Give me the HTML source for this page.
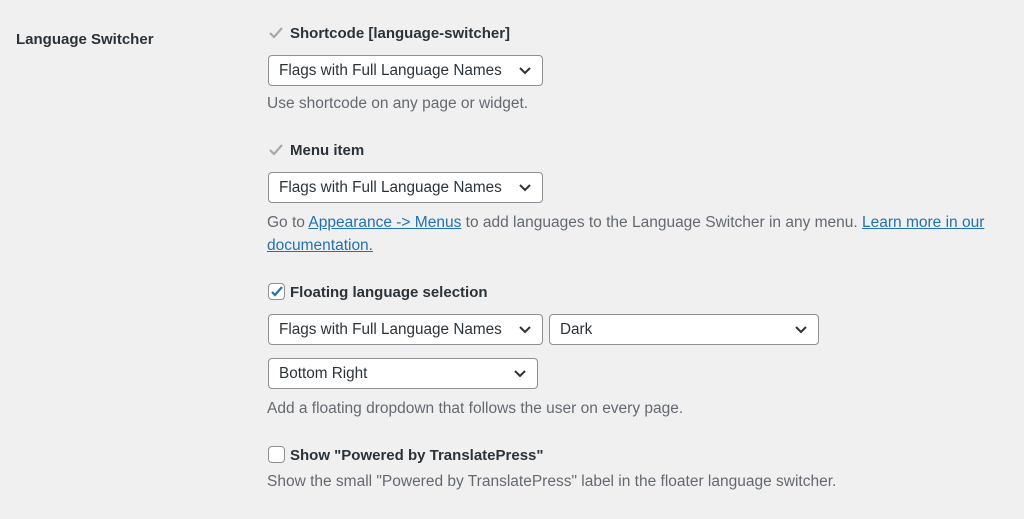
<!DOCTYPE html>
<html><head><style>
body{margin:0;width:1024px;height:519px;background:#f0f0f1;font-family:"Liberation Sans",sans-serif;color:#1d2327;position:relative;overflow:hidden}
.a{position:absolute;white-space:nowrap}
.lbl{font-size:15px;font-weight:bold;color:#2c3338}
.desc{font-size:15.5px;color:#646970}
.sel{position:absolute;height:31px;border:1px solid #8c8f94;border-radius:4px;background:#fff;box-sizing:border-box;font-size:15.3px;color:#2c3338;padding-left:10px;line-height:30px}
.sel svg{position:absolute;right:10px;top:10px}
.cb{position:absolute;width:17px;height:17px;border:1px solid #8c8f94;border-radius:4px;background:#fff;box-sizing:border-box}
a{color:#2271b1;text-decoration:underline}
</style></head><body>
<div class="a lbl" style="left:16px;top:31px">Language Switcher</div>

<svg class="a" style="left:268px;top:26px" width="16" height="14"><path d="M2 7l4 4 8-9" stroke="#a7aaad" stroke-width="2.2" fill="none"/></svg>
<div class="a lbl" style="left:290px;top:25px">Shortcode [language-switcher]</div>
<div class="sel" style="left:268px;top:55px;width:275px">Flags with Full Language Names<svg width="14" height="10"><path d="M2 2l5 5 5-5" stroke="#2c3338" stroke-width="2" fill="none"/></svg></div>
<div class="a desc" style="left:267px;top:95px">Use shortcode on any page or widget.</div>

<svg class="a" style="left:268px;top:143px" width="16" height="14"><path d="M2 7l4 4 8-9" stroke="#a7aaad" stroke-width="2.2" fill="none"/></svg>
<div class="a lbl" style="left:290px;top:142px">Menu item</div>
<div class="sel" style="left:268px;top:172px;width:275px">Flags with Full Language Names<svg width="14" height="10"><path d="M2 2l5 5 5-5" stroke="#2c3338" stroke-width="2" fill="none"/></svg></div>
<div class="a desc" style="left:267px;top:214px">Go to <a>Appearance -&gt; Menus</a> to add languages to the Language Switcher in any menu. <a>Learn more in our</a></div>
<div class="a desc" style="left:267px;top:237px"><a>documentation.</a></div>

<div class="cb" style="left:268px;top:283px"><svg width="17" height="17" style="position:absolute;left:-1px;top:-1px"><path d="M4 9l3 3 7-8" stroke="#2271b1" stroke-width="2.2" fill="none"/></svg></div>
<div class="a lbl" style="left:290px;top:284px">Floating language selection</div>
<div class="sel" style="left:268px;top:314px;width:275px">Flags with Full Language Names<svg width="14" height="10"><path d="M2 2l5 5 5-5" stroke="#2c3338" stroke-width="2" fill="none"/></svg></div>
<div class="sel" style="left:549px;top:314px;width:270px">Dark<svg width="14" height="10"><path d="M2 2l5 5 5-5" stroke="#2c3338" stroke-width="2" fill="none"/></svg></div>
<div class="sel" style="left:268px;top:358px;width:270px">Bottom Right<svg width="14" height="10"><path d="M2 2l5 5 5-5" stroke="#2c3338" stroke-width="2" fill="none"/></svg></div>
<div class="a desc" style="left:267px;top:400px">Add a floating dropdown that follows the user on every page.</div>

<div class="cb" style="left:268px;top:446px"></div>
<div class="a lbl" style="left:290px;top:447px">Show "Powered by TranslatePress"</div>
<div class="a desc" style="left:267px;top:473px">Show the small "Powered by TranslatePress" label in the floater language switcher.</div>
</body></html>
